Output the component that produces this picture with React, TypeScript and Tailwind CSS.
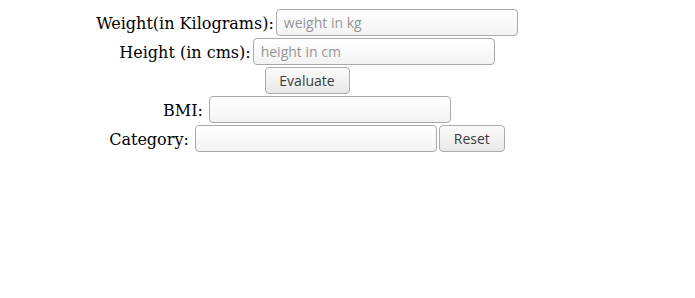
import React from "react";

const inputCls =
  "h-[27px] w-[242px] rounded-[4px] border border-[#a9a9a9] bg-gradient-to-b from-[#ffffff] to-[#f3f3f3] px-[7px] text-[14px] text-[#333] outline-none placeholder:text-[#959595] [font-family:'Open_Sans','DejaVu_Sans',sans-serif]";
const btnCls =
  "h-[27px] rounded-[4px] border border-[#ababab] bg-gradient-to-b from-[#fbfbfb] to-[#e9e9e9] text-[14px] text-[#3c3c3c] [font-family:'Open_Sans','DejaVu_Sans',sans-serif]";

export default function App() {
  return (
    <div className="w-[614px] pt-[9px] text-[16px] text-black [font-family:'DejaVu_Serif',serif]">
      <div className="flex h-[29px] items-start justify-center">
        <span className="mt-[3px] mr-[2px]">Weight(in Kilograms):</span>
        <input className={inputCls} placeholder="weight in kg" />
      </div>
      <div className="flex h-[29px] items-start justify-center">
        <span className="mt-[3px] mr-[2px]">Height (in cms):</span>
        <input className={inputCls} placeholder="height in cm" />
      </div>
      <div className="flex h-[29px] items-start justify-center">
        <button className={btnCls + " w-[85px]"}>Evaluate</button>
      </div>
      <div className="flex h-[29px] items-start justify-center">
        <span className="mt-[3px] mr-[6px]">BMI:</span>
        <input className={inputCls} />
      </div>
      <div className="flex h-[29px] items-start justify-center">
        <span className="mt-[3px] mr-[6px]">Category:</span>
        <input className={inputCls} />
        <button className={btnCls + " ml-[2px] w-[66px]"}>Reset</button>
      </div>
    </div>
  );
}
